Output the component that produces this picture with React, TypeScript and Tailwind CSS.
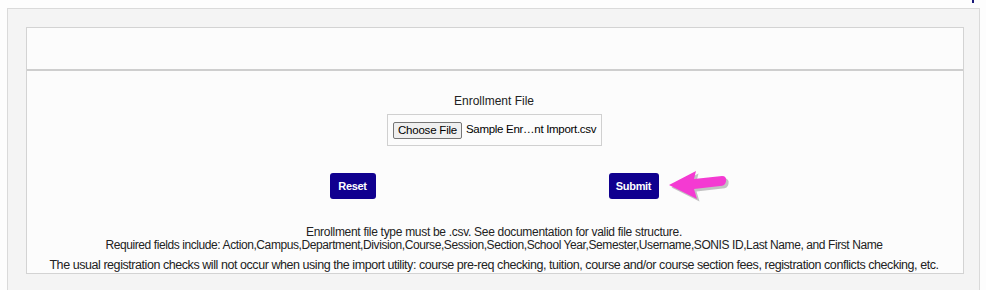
export default function App() {
  const font = { fontFamily: '"Liberation Sans", Arial, sans-serif' };
  return (
    <div className="relative w-[986px] h-[290px] overflow-hidden bg-[#fdfdfd]" style={font}>
      {/* small cut-off mark top right */}
      <div className="absolute left-[972px] top-0 w-[2px] h-[3px] bg-[#1a1a7a]" />

      <div className="ml-[7px] mt-[8px] w-[973px] h-[300px] border border-[#dadada] bg-[#f4f4f4] pt-[18px] pl-[18px]">
        <div className="w-[938px] h-[247px] border border-[#d3d3d3] bg-[#fcfcfc] flex flex-col">
          <div className="h-[43px] border-b-2 border-[#cecece]" />

          <div className="flex flex-col items-center text-[#222] pr-[2px]">
            <div className="mt-[23px] text-[12px] leading-[14px]">Enrollment File</div>
            <div className="mt-[6px] ml-[1px] w-[215px] h-[32px] border border-[#d0d0d0] flex items-center pl-[5px] whitespace-nowrap">
              <button className="shrink-0 w-[69px] h-[17px] border border-[#767676] bg-[#efefef] rounded-[2px] text-[11.5px] leading-[15px] tracking-[-0.2px] text-black whitespace-nowrap">
                Choose File
              </button>
              <span className="ml-[4px] text-[11.5px] tracking-[-0.3px] text-black whitespace-nowrap">Sample Enr…nt Import.csv</span>
            </div>

            <div className="mt-[27px] flex relative pr-[2px]">
              <div className="w-[281px] flex justify-center">
                <button className="w-[46px] h-[26px] bg-[#10008f] rounded-[3px] text-white text-[11px] font-bold tracking-[-0.3px]">
                  Reset
                </button>
              </div>
              <div className="w-[281px] flex justify-center">
                <button className="w-[50px] h-[26px] bg-[#10008f] rounded-[3px] text-white text-[11px] font-bold tracking-[-0.3px]">
                  Submit
                </button>
              </div>
              <svg className="absolute left-[456px] top-[-2px]" width="66" height="34" viewBox="0 0 66 34">
                <g transform="translate(2.5,2.5)" opacity="0.35" fill="#555">
                  <path d="M1 14 L28 0 L26 8 L54 5 Q59 5 58 10.5 Q57 15 52 15 L26 18 L29 28 Z" />
                </g>
                <path d="M1 14 L28 0 L26 8 L54 5 Q59 5 58 10.5 Q57 15 52 15 L26 18 L29 28 Z" fill="#f43ad2" />
              </svg>
            </div>

            <div className="mt-[27px] text-[12px] leading-[13px] text-center tracking-[-0.3px] whitespace-nowrap">
              Enrollment file type must be .csv. See documentation for valid file structure.
            </div>
            <div className="text-[12px] leading-[13px] text-center tracking-[-0.41px] whitespace-nowrap">
              Required fields include: Action,Campus,Department,Division,Course,Session,Section,School Year,Semester,Username,SONIS ID,Last Name, and First Name
            </div>
            <div className="mt-[6px] text-[12.5px] leading-[14px] text-center tracking-[-0.44px] whitespace-nowrap">
              The usual registration checks will not occur when using the import utility: course pre-req checking, tuition, course and/or course section fees, registration conflicts checking, etc.
            </div>
          </div>
        </div>
      </div>
    </div>
  );
}
